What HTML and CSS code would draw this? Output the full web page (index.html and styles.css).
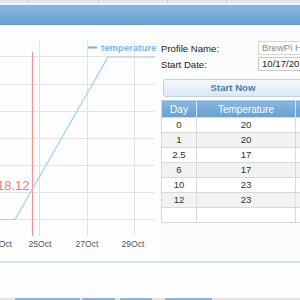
FILE: index.html
```html
<!DOCTYPE html>
<html>
<head>
<meta charset="utf-8">
<link rel="stylesheet" href="styles.css">
</head>
<body>
<div class="page">
  <div class="tabs">
    <span class="tab t1"></span><span class="tab t2"></span><span class="tab t3"></span><span class="tab t4"></span><span class="tab t5"></span>
  </div>
  <div class="header"></div>
  <div class="main">
    <svg class="chart" width="155" height="236" viewBox="0 26 155 236" xmlns="http://www.w3.org/2000/svg">
      <g stroke="#e2e2e2" stroke-width="1">
        <line x1="0" y1="57.5" x2="155" y2="57.5"/>
        <line x1="0" y1="85.5" x2="155" y2="85.5"/>
        <line x1="0" y1="112.5" x2="155" y2="112.5"/>
        <line x1="0" y1="139.5" x2="155" y2="139.5"/>
        <line x1="0" y1="166.5" x2="155" y2="166.5"/>
        <line x1="0" y1="193.5" x2="155" y2="193.5"/>
        <line x1="0" y1="220.5" x2="155" y2="220.5"/>
        <line x1="39.5" y1="42" x2="39.5" y2="237"/>
        <line x1="87.5" y1="42" x2="87.5" y2="237"/>
        <line x1="134.5" y1="42" x2="134.5" y2="237"/>
      </g>
      <line x1="32.5" y1="53" x2="32.5" y2="237" stroke="#ff8a8a" stroke-width="1"/>
      <polyline points="0,220.5 15,220.5 108,58 155,58" fill="none" stroke="#9fcdf6" stroke-width="1.2"/>
      <line x1="88" y1="48.5" x2="97" y2="48.5" stroke="#70b5f3" stroke-width="2"/>
      <text x="101" y="52" class="legend">temperature</text>
      <text x="-3" y="191" class="marker">18.12</text>
      <text x="12" y="248" class="axis" text-anchor="end">Oct</text>
      <text x="40" y="248" class="axis" text-anchor="middle">25Oct</text>
      <text x="87" y="248" class="axis" text-anchor="middle">27Oct</text>
      <text x="133" y="248" class="axis" text-anchor="middle">29Oct</text>
    </svg>
    <div class="panel">
      <div class="form">
        <span class="label">Profile Name:</span>
        <span class="input muted">BrewPi He</span>
        <span class="label">Start Date:</span>
        <span class="input">10/17/20</span>
      </div>
      <div class="button">Start Now</div>
      <table class="steps">
        <thead>
          <tr><th class="c1">Day</th><th class="c2">Temperature</th><th class="c3"></th></tr>
        </thead>
        <tbody>
          <tr><td>0</td><td>20</td><td></td></tr>
          <tr class="alt"><td>1</td><td>20</td><td></td></tr>
          <tr><td>2.5</td><td>17</td><td></td></tr>
          <tr class="alt"><td>6</td><td>17</td><td></td></tr>
          <tr><td>10</td><td>23</td><td></td></tr>
          <tr class="alt"><td>12</td><td>23</td><td></td></tr>
          <tr><td></td><td></td><td></td></tr>
        </tbody>
      </table>
    </div>
  </div>
  <div class="footer"></div>
  <div class="bottomstrip">
    <span class="seg b1"></span><span class="seg b2"></span><span class="seg b3"></span><span class="seg b4"></span><span class="seg rest"></span>
  </div>
</div>
</body>
</html>
```
FILE: styles.css
```css
html, body {
  margin: 0;
  padding: 0;
  background: #fdfdfd;
}
body {
  width: 300px;
  height: 300px;
  overflow: hidden;
  font-family: "Liberation Sans", Arial, sans-serif;
}
.page {
  width: 300px;
  height: 300px;
  display: flex;
  flex-direction: column;
}
.tabs {
  height: 3px;
  display: flex;
  background: #e3e7ea;
  border-bottom: 2px solid #f4f6f8;
}
.tab {
  height: 3px;
  border-right: 1px solid #c9ced3;
}
.t1 { width: 28px; }
.t2 { width: 69px; }
.t3 { width: 68px; }
.t4 { width: 58px; }
.t5 { flex: 1; border-right: none; }
.header {
  height: 20px;
  background: linear-gradient(180deg, #88b7dd 0%, #7fb1da 45%, #72a9d6 60%, #6aa4d3 100%);
  border-bottom: 1px solid #5f9dd0;
}
.main {
  height: 236px;
  display: flex;
  background: #fbfcfc;
}
.chart {
  display: block;
  flex: none;
  background: #fdfdfd;
  overflow: visible;
}
.legend {
  font-family: "Liberation Sans", Arial, sans-serif;
  font-weight: bold;
  font-size: 9.6px;
  fill: #78b9f4;
}
.marker {
  font-family: "Liberation Sans", Arial, sans-serif;
  font-size: 13px;
  fill: #f07a7a;
}
.axis {
  font-family: "Liberation Sans", Arial, sans-serif;
  font-size: 8.6px;
  fill: #555;
}
.panel {
  padding: 16px 0 0 6px;
  display: flex;
  flex-direction: column;
  align-items: flex-start;
  min-width: 0;
}
.form {
  display: grid;
  grid-template-columns: 97px 70px;
  grid-auto-rows: 14px;
  row-gap: 2px;
  align-items: center;
  font-size: 9.6px;
  color: #222;
}
.label {
  line-height: 14px;
  padding-top: 2px;
}
.input {
  height: 14px;
  box-sizing: border-box;
  border: 1px solid #c8c8c8;
  background: #fff;
  padding-left: 3px;
  line-height: 12px;
  font-size: 9.6px;
  color: #222;
  white-space: nowrap;
  overflow: hidden;
}
.input.muted {
  color: #8a8a8a;
  border-color: #d4d4d4;
}
.button {
  margin: 8px 0 0 2px;
  width: 140px;
  height: 18px;
  box-sizing: border-box;
  border: 1px solid #bcd3e8;
  border-radius: 3px;
  background: linear-gradient(180deg, #f4f8fc 0%, #e6eff8 55%, #dbe8f4 100%);
  color: #4d7ca9;
  font-weight: bold;
  font-size: 9.6px;
  text-align: center;
  line-height: 16px;
}
.steps {
  margin-top: 3px;
  border-collapse: collapse;
  font-size: 9.6px;
  color: #333;
  table-layout: fixed;
  width: 170px;
}
.steps th {
  height: 16px;
  padding: 0;
  font-weight: normal;
  font-size: 10px;
  color: #fff;
  background: linear-gradient(180deg, #8bb8df 0%, #74a9d7 50%, #6aa2d3 100%);
  border-right: 1px solid #d7e5f1;
  border-top: 1px solid #b9cfe2;
  line-height: 15px;
}
.c1 { width: 34px; }
.c2 { width: 98px; }
.c3 { width: 38px; }
.steps td {
  height: 14px;
  padding: 0;
  text-align: center;
  border: 1px solid #d9d9d9;
  line-height: 14px;
  background: #fff;
}
.steps tr.alt td {
  background: #f2f2f2;
}
.steps th:first-child,
.steps td:first-child {
  border-left: 1px solid #d9d9d9;
}
.footer {
  height: 36px;
  border-top: 2px solid #d3e3f1;
  background: #fdfdfd;
}
.bottomstrip {
  height: 2px;
  display: flex;
  background: #e4e4e4;
}
.seg { height: 2px; }
.b1 { width: 65px; margin-left: 15px; background: #8fb4d4; }
.b2 { width: 33px; margin-left: 2px; background: #8fb4d4; }
.b3 { width: 32px; margin-left: 5px; background: #8fb4d4; }
.b4 { width: 47px; margin-left: 13px; background: #8fb4d4; }
.rest { flex: 1; }
```
